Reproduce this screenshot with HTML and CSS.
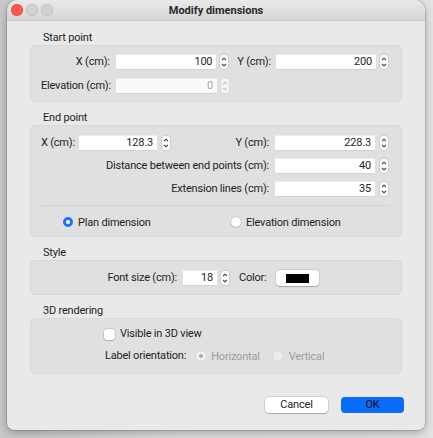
FILE: index.html
```html
<!DOCTYPE html>
<html>
<head>
<meta charset="utf-8">
<link rel="stylesheet" href="styles.css">
</head>
<body>
<div class="window">
  <div class="titlebar">
    <div class="lights"><span class="light red"></span><span class="light"></span><span class="light"></span></div>
    <div class="title">Modify dimensions</div>
  </div>
  <div class="content">
    <div class="section-label">Start point</div>
    <div class="group g-start">
      <div class="row">
        <span class="lbl start-lbl">X (cm):</span>
        <span class="field w101">100</span>
        <svg class="spin" width="10" height="16" viewBox="0 0 10 16"><rect x="0.5" y="0.5" width="9" height="15" rx="3.5" fill="#fff" stroke="#cdcdcd"/><path d="M3 6.2 L5 4.2 L7 6.2" fill="none" stroke="#3a3a3a" stroke-width="1.1"/><path d="M3 9.8 L5 11.8 L7 9.8" fill="none" stroke="#3a3a3a" stroke-width="1.1"/></svg>
        <span class="lbl y-lbl">Y (cm):</span>
        <span class="field w100">200</span>
        <svg class="spin" width="10" height="16" viewBox="0 0 10 16"><rect x="0.5" y="0.5" width="9" height="15" rx="3.5" fill="#fff" stroke="#cdcdcd"/><path d="M3 6.2 L5 4.2 L7 6.2" fill="none" stroke="#3a3a3a" stroke-width="1.1"/><path d="M3 9.8 L5 11.8 L7 9.8" fill="none" stroke="#3a3a3a" stroke-width="1.1"/></svg>
      </div>
      <div class="row">
        <span class="lbl start-lbl">Elevation (cm):</span>
        <span class="field w101 disabled">0</span>
        <svg class="spin" width="10" height="16" viewBox="0 0 10 16"><rect x="0.5" y="0.5" width="9" height="15" rx="3.5" fill="#f4f4f4" stroke="#dadada"/><path d="M3 6.2 L5 4.2 L7 6.2" fill="none" stroke="#c2c2c2" stroke-width="1.1"/><path d="M3 9.8 L5 11.8 L7 9.8" fill="none" stroke="#c2c2c2" stroke-width="1.1"/></svg>
      </div>
    </div>

    <div class="section-label">End point</div>
    <div class="group g-end">
      <div class="row">
        <span class="lbl x-lbl">X (cm):</span>
        <span class="field w78">128.3</span>
        <svg class="spin" width="10" height="16" viewBox="0 0 10 16"><rect x="0.5" y="0.5" width="9" height="15" rx="3.5" fill="#fff" stroke="#cdcdcd"/><path d="M3 6.2 L5 4.2 L7 6.2" fill="none" stroke="#3a3a3a" stroke-width="1.1"/><path d="M3 9.8 L5 11.8 L7 9.8" fill="none" stroke="#3a3a3a" stroke-width="1.1"/></svg>
        <span class="lbl grow">Y (cm):</span>
        <span class="field w100 ml6">228.3</span>
        <svg class="spin" width="10" height="16" viewBox="0 0 10 16"><rect x="0.5" y="0.5" width="9" height="15" rx="3.5" fill="#fff" stroke="#cdcdcd"/><path d="M3 6.2 L5 4.2 L7 6.2" fill="none" stroke="#3a3a3a" stroke-width="1.1"/><path d="M3 9.8 L5 11.8 L7 9.8" fill="none" stroke="#3a3a3a" stroke-width="1.1"/></svg>
      </div>
      <div class="row">
        <span class="lbl grow">Distance between end points (cm):</span>
        <span class="field w100 ml6">40</span>
        <svg class="spin" width="10" height="16" viewBox="0 0 10 16"><rect x="0.5" y="0.5" width="9" height="15" rx="3.5" fill="#fff" stroke="#cdcdcd"/><path d="M3 6.2 L5 4.2 L7 6.2" fill="none" stroke="#3a3a3a" stroke-width="1.1"/><path d="M3 9.8 L5 11.8 L7 9.8" fill="none" stroke="#3a3a3a" stroke-width="1.1"/></svg>
      </div>
      <div class="row">
        <span class="lbl grow">Extension lines (cm):</span>
        <span class="field w100 ml6">35</span>
        <svg class="spin" width="10" height="16" viewBox="0 0 10 16"><rect x="0.5" y="0.5" width="9" height="15" rx="3.5" fill="#fff" stroke="#cdcdcd"/><path d="M3 6.2 L5 4.2 L7 6.2" fill="none" stroke="#3a3a3a" stroke-width="1.1"/><path d="M3 9.8 L5 11.8 L7 9.8" fill="none" stroke="#3a3a3a" stroke-width="1.1"/></svg>
      </div>
      <div class="separator"></div>
      <div class="row radios">
        <span class="radio-item first"><span class="radio on"></span>Plan dimension</span>
        <span class="radio-item"><span class="radio"></span>Elevation dimension</span>
      </div>
    </div>

    <div class="section-label">Style</div>
    <div class="group g-style">
      <div class="row center">
        <span class="lbl">Font size (cm):</span>
        <span class="field w34 ml6">18</span>
        <svg class="spin" width="10" height="16" viewBox="0 0 10 16"><rect x="0.5" y="0.5" width="9" height="15" rx="3.5" fill="#fff" stroke="#cdcdcd"/><path d="M3 6.2 L5 4.2 L7 6.2" fill="none" stroke="#3a3a3a" stroke-width="1.1"/><path d="M3 9.8 L5 11.8 L7 9.8" fill="none" stroke="#3a3a3a" stroke-width="1.1"/></svg>
        <span class="lbl color-lbl">Color:</span>
        <span class="color-btn"><span class="swatch"></span></span>
      </div>
    </div>

    <div class="section-label">3D rendering</div>
    <div class="group g-3d">
      <div class="row">
        <span class="checkbox"></span>
        <span class="lbl">Visible in 3D view</span>
      </div>
      <div class="row">
        <span class="lbl orient-lbl">Label orientation:</span>
        <span class="radio-item dis"><span class="radio dis-on"></span>Horizontal</span>
        <span class="radio-item dis vert"><span class="radio dis-off"></span>Vertical</span>
      </div>
    </div>

    <div class="footer">
      <span class="btn cancel">Cancel</span>
      <span class="btn ok">OK</span>
    </div>
  </div>
</div>
</body>
</html>
```

FILE: styles.css
```css
html, body {
  margin: 0;
  padding: 0;
}
body {
  width: 433px;
  height: 438px;
  overflow: hidden;
  background: linear-gradient(90deg, #c9c9c9 0%, #dedede 40%, #e4e4e4 100%);
  font-family: Roboto, "Liberation Sans", Arial, sans-serif;
  font-size: 11px;
  letter-spacing: -0.2px;
  color: #1e1e1e;
}
.window {
  margin-left: 7px;
  width: 418px;
  height: 430px;
  background: #e9e9e9;
  border-radius: 10px 10px 7px 7px;
  box-shadow: 0 0 0 0.5px rgba(0,0,0,0.25), 0 3px 10px rgba(0,0,0,0.28);
  overflow: hidden;
  display: flex;
  flex-direction: column;
}
.titlebar {
  position: relative;
  height: 20px;
  border-bottom: 1px solid #c8c8c8;
  background: linear-gradient(#e9e9e9, #d5d5d5);
  display: flex;
  align-items: center;
  justify-content: center;
}
.lights {
  position: absolute;
  left: 4px;
  top: 4px;
  display: flex;
  gap: 3px;
}
.light {
  width: 12px;
  height: 12px;
  border-radius: 50%;
  background: #d0d0d0;
  box-shadow: inset 0 0 0 0.5px rgba(0,0,0,0.12);
}
.light.red {
  background: #fb5a54;
  box-shadow: inset 0 0 0 0.5px rgba(180,40,30,0.5);
}
.title {
  font-weight: bold;
  font-size: 11px;
  letter-spacing: 0;
  color: #2a2a2a;
}
.content {
  flex: 1;
  padding: 10px 23px 0 23px;
  display: flex;
  flex-direction: column;
}
.section-label {
  height: 14px;
  line-height: 14px;
  padding-left: 13px;
}
.group {
  background: #e0e0e0;
  border: 1px solid #d9d9d9;
  border-radius: 5px;
  margin-bottom: 9px;
  display: flex;
  flex-direction: column;
}
.row {
  display: flex;
  align-items: center;
  height: 16px;
}
.lbl {
  white-space: nowrap;
  line-height: 16px;
}
.grow {
  flex: 1;
  text-align: right;
}
.field {
  height: 16px;
  line-height: 16px;
  background: #fff;
  text-align: right;
  padding-right: 4px;
  box-sizing: border-box;
  box-shadow: inset 0 -1px 0 #d2d2d2, inset 0 1px 0 #ececec;
  color: #1e1e1e;
}
.field.disabled {
  color: #a8a8a8;
  background: #fafafa;
}
.w101 { width: 101px; margin-left: 6px; }
.w100 { width: 100px; }
.w78 { width: 78px; }
.w34 { width: 34px; }
.ml6 { margin-left: 6px; }
.spin {
  flex: none;
  margin-left: 3px;
}

/* start point */
.g-start {
  padding: 8px 12px 7px 10px;
  gap: 8px;
}
.start-lbl {
  width: 69px;
  text-align: right;
}
.y-lbl {
  margin-left: 8px;
  width: 33px;
}
.g-start .w100 {
  margin-left: 6px;
}

/* end point */
.g-end {
  padding: 9px 12px 6px 10px;
  gap: 7px;
}
.x-lbl {
  width: 38px;
}
.g-end .spin {
  margin-left: 4px;
}
.separator {
  height: 1px;
  background: #d2d2d2;
  margin: 1px 0;
}
.radios {
  padding-left: 22px;
}
.radio-item {
  display: flex;
  align-items: center;
  white-space: nowrap;
}
.radio-item.first {
  width: 168px;
}
.radio {
  width: 10px;
  height: 10px;
  border-radius: 50%;
  background: #fff;
  box-shadow: 0 0 0 0.5px rgba(0,0,0,0.18), 0 0.5px 1px rgba(0,0,0,0.15);
  margin-right: 5px;
  box-sizing: border-box;
}
.radio.on {
  background: #1b74f7;
  border: 3px solid #1b74f7;
  background-clip: padding-box;
  box-shadow: none;
  position: relative;
}
.radio.on::after {
  content: "";
  position: absolute;
  left: 0;
  top: 0;
  width: 4px;
  height: 4px;
  border-radius: 50%;
  background: #fff;
}

/* style */
.g-style {
  padding: 9px 12px 8px 10px;
}
.center {
  justify-content: center;
  padding-right: 4px;
}
.g-style .spin {
  margin-left: 3px;
}
.color-lbl {
  margin-left: 9px;
}
.color-btn {
  margin-left: 9px;
  width: 43px;
  height: 16px;
  background: #fff;
  border-radius: 4px;
  box-shadow: 0 0 0 0.5px rgba(0,0,0,0.15), 0 0.5px 1px rgba(0,0,0,0.2);
  display: flex;
  align-items: center;
  justify-content: center;
}
.swatch {
  width: 23px;
  height: 9px;
  background: #000;
}

/* 3d */
.g-3d {
  padding: 7px 12px 9px 73px;
  gap: 6px;
}
.checkbox {
  width: 11px;
  height: 11px;
  background: #fff;
  border-radius: 3px;
  box-shadow: 0 0 0 0.5px rgba(0,0,0,0.2), 0 0.5px 1px rgba(0,0,0,0.15);
  margin-right: 5px;
}
.orient-lbl {
  margin-left: 1px;
  margin-right: 10px;
}
.radio-item.dis {
  color: #9c9c9c;
}
.radio-item.vert {
  margin-left: 13px;
}
.radio-item.vert .radio {
  margin-right: 6px;
}
.radio.dis-on {
  background: #f1f1f1;
  box-shadow: 0 0 0 0.5px rgba(0,0,0,0.08);
  position: relative;
}
.radio.dis-on::after {
  content: "";
  position: absolute;
  left: 3px;
  top: 3px;
  width: 4px;
  height: 4px;
  border-radius: 50%;
  background: #a9a9a9;
}
.radio.dis-off {
  background: #ececec;
  box-shadow: 0 0 0 0.5px rgba(0,0,0,0.08);
}

/* footer */
.footer {
  display: flex;
  justify-content: flex-end;
  gap: 13px;
  margin-top: 14px;
  margin-right: -2px;
}
.btn {
  width: 63px;
  height: 16px;
  line-height: 16px;
  text-align: center;
  border-radius: 4px;
}
.cancel {
  background: #fff;
  box-shadow: 0 0 0 0.5px rgba(0,0,0,0.18), 0 0.5px 1px rgba(0,0,0,0.2);
}
.ok {
  background: #0a6bfa;
  color: #111;
}
```
